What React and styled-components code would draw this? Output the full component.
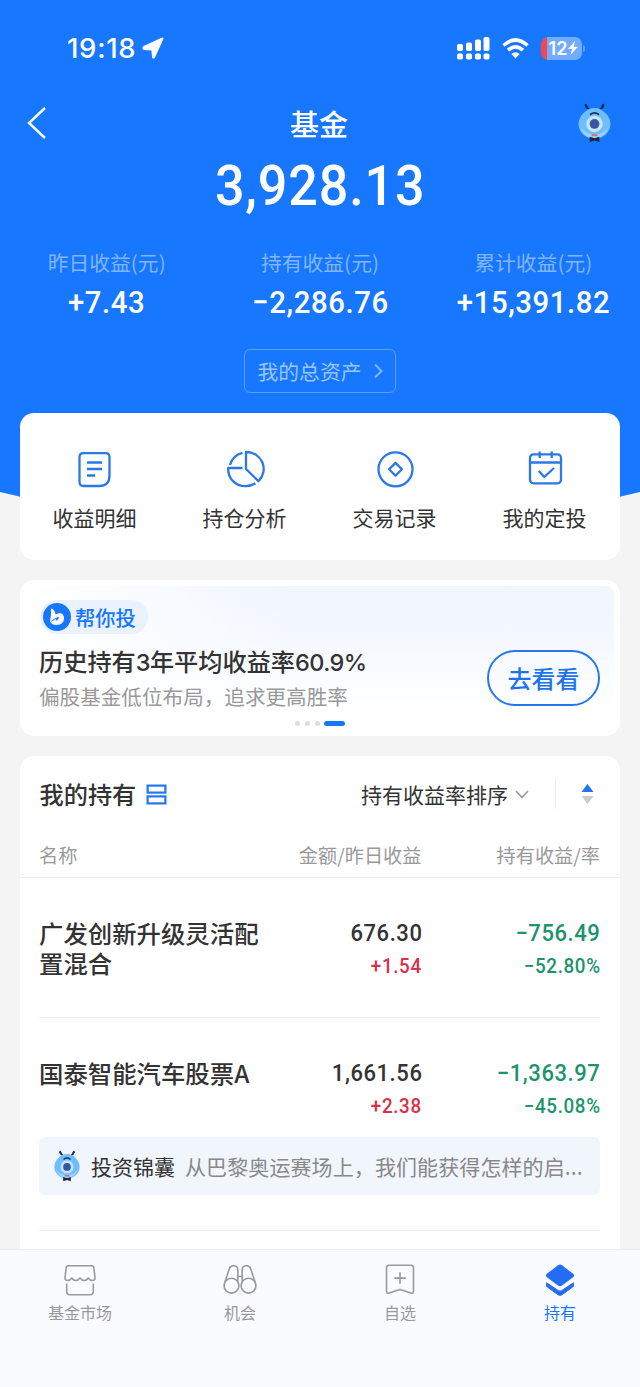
import React from "react";
import styled, { createGlobalStyle, css } from "styled-components";

const cjk = `"Noto Sans CJK SC", sans-serif`;
const blue = "#1777ff";

const GlobalStyle = createGlobalStyle`
  * { box-sizing: border-box; }
  body { margin: 0; background: #f4f4f4; font-family: ${cjk}; color: #333; }
  svg { display: block; flex: none; overflow: visible; }
`;

const Screen = styled.div`
  width: 640px;
  height: 1387px;
  overflow: hidden;
  display: flex;
  flex-direction: column;
  background: #f4f4f4;
`;

const Scroll = styled.main`
  height: 1249px;
  flex: none;
  overflow: hidden;
`;

const Hero = styled.header`
  height: 540px;
  background: ${blue};
  color: #fff;
  clip-path: path("M0 0H640V492Q320 572 0 492Z");
`;

const StatusBar = styled.div`
  height: 96px;
  padding: 0 55px 0 67px;
  display: flex;
  align-items: center;
  justify-content: space-between;
`;

const Clock = styled.div`
  display: flex;
  align-items: center;
  gap: 6px;
  font: 500 27.5px/32px Inter, sans-serif;
  letter-spacing: 0.7px;
`;

const StatusIcons = styled.div`
  display: flex;
  align-items: center;
  gap: 12px;
`;

const Battery = styled.div`
  width: 41px;
  height: 23px;
  border-radius: 7px;
  display: flex;
  align-items: center;
  justify-content: center;
  gap: 1px;
  padding-left: 4px;
  background: linear-gradient(90deg, #f0484d 0 6px, #72abff 6px);
  font: 600 18px/23px Inter, sans-serif;
`;

const BatteryWrap = styled.div`
  display: flex;
  align-items: center;
  gap: 1px;
`;

const BatteryTip = styled.div`
  width: 2px;
  height: 7px;
  border-radius: 0 2px 2px 0;
  background: #5c9dff;
`;

const NavBar = styled.div`
  height: 54px;
  padding: 0 29px 0 27px;
  display: grid;
  grid-template-columns: 60px 1fr 60px;
  align-items: center;
  justify-items: start;
  & > svg:last-child { justify-self: end; }
`;

const NavTitle = styled.h1`
  margin: 0;
  justify-self: center;
  font-size: 29px;
  line-height: 40px;
  font-weight: 500;
`;

const Num = styled.span`
  display: inline-block;
  font-family: Roboto, sans-serif;
  font-weight: 500;
  font-size: ${(p) => p.$size}px;
  line-height: ${(p) => p.$line}px;
  letter-spacing: ${(p) => p.$spacing || 0}px;
  margin-right: -${(p) => p.$spacing || 0}px;
  color: ${(p) => p.$color || "inherit"};
  white-space: nowrap;
  transform: scaleX(0.93);
  transform-origin: ${(p) => (p.$end ? "right" : "center")};
`;

const Total = styled.div`
  height: 76px;
  padding-bottom: 5px;
  display: flex;
  justify-content: center;
  align-items: center;
`;

const Stats = styled.div`
  display: grid;
  grid-template-columns: repeat(3, 213.3px);
  padding-top: 21px;
`;

const Stat = styled.div`
  display: flex;
  flex-direction: column;
  align-items: center;
  gap: 6px;
`;

const StatLabel = styled.span`
  font-size: 20.8px;
  line-height: 30px;
  color: #80b5ff;
`;

const AssetsButton = styled.button`
  width: 152px;
  height: 44px;
  margin: 26px auto 0;
  padding: 0 12px 0 12.5px;
  display: flex;
  align-items: center;
  justify-content: space-between;
  border: 1px solid #5c9fff;
  border-radius: 6px;
  background: none;
  color: #9bc5ff;
  font: 20.8px/30px ${cjk};
`;

const Card = styled.section`
  width: 600px;
  margin: 0 auto 20px;
  border-radius: 14px;
  background: #fff;
`;

const QuickCard = styled(Card)`
  position: relative;
  height: 147px;
  margin-top: -127px;
  display: grid;
  grid-template-columns: repeat(4, 150px);
`;

const Quick = styled.div`
  display: flex;
  flex-direction: column;
  align-items: center;
  padding: 36px 1px 0 0;
  gap: 13px;
  font-size: 21px;
  line-height: 30px;
`;

const Promo = styled(Card)`
  height: 156px;
  padding: 6px;
`;

const PromoBody = styled.div`
  height: 144px;
  border-radius: 8px;
  padding: 14px 14px 0 14px;
  display: flex;
  justify-content: space-between;
  background:
    linear-gradient(90deg, #fff 0%, rgba(255, 255, 255, 0) 45%),
    linear-gradient(180deg, #f0f6ff 0%, #f5f9ff 40%, #fff 85%);
`;

const PromoText = styled.div`
  width: 340px;
`;

const Badge = styled.div`
  display: flex;
  align-items: center;
  gap: 4px;
  width: 108px;
  height: 34px;
  padding-left: 3px;
  border-radius: 17px;
  background: #e9f2fe;
  color: ${blue};
  font-size: 20.3px;
  line-height: 34px;
  font-weight: 500;
`;

const PromoTitle = styled.h2`
  margin: 9px 0 0 -1px;
  font: 500 24.2px/36px ${cjk};
  white-space: nowrap;
`;

const Latin = styled.span`
  font-family: Inter, sans-serif;
  font-size: 23.5px;
  letter-spacing: -0.6px;
`;

const PromoSub = styled.p`
  margin: 0 0 0 -1px;
  font-size: 20.6px;
  line-height: 30px;
  color: #999;
  white-space: nowrap;
`;

const Dots = styled.div`
  display: flex;
  align-items: center;
  gap: 5px;
  margin: 10px 0 0 255px;
`;

const Dot = styled.i`
  width: ${(p) => (p.$active ? 21 : 5)}px;
  height: 5px;
  border-radius: 2.5px;
  background: ${(p) => (p.$active ? blue : "#dcdee1")};
  margin-left: ${(p) => (p.$active ? -1 : 0)}px;
`;

const PromoButton = styled.button`
  width: 113px;
  height: 56px;
  margin-top: 50px;
  padding: 0;
  border: 2px solid #2777e6;
  border-radius: 28px;
  background: transparent;
  color: #1b73ef;
  font: 500 24px/36px ${cjk};
`;

const Holdings = styled(Card)`
  height: 520px;
`;

const HoldingsHead = styled.div`
  height: 78px;
  padding: 0 26px 2px 19.5px;
  display: flex;
  align-items: center;
`;

const HoldingsTitle = styled.h2`
  margin: 0 9.5px 0 0;
  font-size: 24.2px;
  line-height: 36px;
  font-weight: 500;
`;

const SortBy = styled.div`
  margin-left: auto;
  display: flex;
  align-items: center;
  gap: 7px;
  font-size: 21px;
  line-height: 30px;
`;

const Rule = styled.span`
  width: 1px;
  height: 30px;
  margin: 0 25px 0 26px;
  background: #eee;
`;

const columns = css`
  display: grid;
  grid-template-columns: 240px 142.5px 178.5px;
`;

const ColumnHead = styled.div`
  ${columns}
  height: 44px;
  padding: 6px 20px 0 19px;
  border-bottom: 1px solid #eee;
  font-size: 19.2px;
  line-height: 30px;
  color: #999;
  & > span + span { text-align: right; }
`;

const Fund = styled.article`
  ${columns}
  height: ${(p) => p.$height}px;
  margin: 0 20px 0 19px;
  padding-top: 40px;
  border-bottom: 1px solid #f0f0f0;
  align-content: start;
`;

const FundName = styled.h3`
  margin: 0;
  font-size: 24.4px;
  line-height: 29.5px;
  font-weight: 500;
`;

const Figures = styled.div`
  display: flex;
  flex-direction: column;
  align-items: flex-end;
  gap: 3px;
`;

const Tip = styled.div`
  grid-column: 1 / -1;
  height: 58px;
  margin-top: 16px;
  padding: 0 14px 0 15px;
  display: flex;
  align-items: center;
  border-radius: 6px;
  background: #f1f6fd;
  font-size: 21px;
  line-height: 30px;
  white-space: nowrap;
`;

const TipTitle = styled.span`
  margin: 0 10px 0 11px;
`;

const TipText = styled.span`
  color: #888;
  letter-spacing: 0.1px;
`;

const TabBar = styled.nav`
  height: 138px;
  display: grid;
  grid-template-columns: repeat(4, 160px);
  border-top: 1px solid #ececf0;
  background: #f9fbff;
`;

const Tab = styled.div`
  display: flex;
  flex-direction: column;
  align-items: center;
  gap: 3px;
  padding-top: 13px;
  font-size: 16px;
  line-height: 24px;
  color: ${(p) => (p.$active ? blue : "#999")};
`;

const Mascot = ({ width, height }) => (
  <svg width={width} height={height} viewBox="0 0 34 40" preserveAspectRatio="none">
    <path d="M12 6.500L7.800 2M22 6.500L26.200 2" stroke="#16305c" strokeWidth="2" strokeLinecap="round" />
    <path d="M8 1l1.500 3M26 1l-1.500 3" stroke="#16305c" strokeWidth="2.400" strokeLinecap="round" />
    <path d="M17 4C25 4 33.500 12 33.500 20.500S26 35.500 17 35.500.5 29 .5 20.500 9 4 17 4Z" fill="#70bdfb" />
    <path d="M3 24C5 32 12 35.500 17 35.500s12-3.500 14-11.500c-4 5-8 7-14 7S7 29 3 24Z" fill="#9ad5ff" />
    <circle cx="17" cy="20.500" r="8.500" fill="#c5e5ff" />
    <path d="M13 10.500q4-3 8 0" fill="none" stroke="#15315c" strokeWidth="1.800" strokeLinecap="round" />
    <circle cx="17" cy="20.500" r="5" fill="#34579d" />
    <path d="M14 32h6" stroke="#e16a70" strokeWidth="2" />
    <path d="M12 33.500l5 1.500 5-1.500v5.500l-5-1.500-5 1.500Z" fill="#1b2640" />
  </svg>
);

const iconLine = { fill: "none", stroke: "#2b78e8", strokeWidth: 2.3, strokeLinejoin: "round" };

const DetailIcon = () => (
  <svg width="40" height="40" viewBox="0 0 40 40" {...iconLine}>
    <path d="M8.500 4.200H30.500Q34.500 4.200 34.500 8.200V26.500Q34.500 37 24 37H8.500Q4.500 37 4.500 33V8.200Q4.500 4.200 8.500 4.200Z" />
    <path d="M12 13.500H27M12 20H27M12 26.500H20" />
  </svg>
);

const AnalysisIcon = () => (
  <svg width="40" height="40" viewBox="0 0 40 40" {...iconLine}>
    <path d="M21 3A17 17 0 0 1 33.500 32.200L21 20Z" />
    <path d="M17.500 3.800A17.200 17.200 0 0 0 5 16M17.500 19H3.200C2.800 29 10 37.200 20.500 37.200Q26 37.200 30.500 34.200" />
  </svg>
);

const RecordIcon = () => (
  <svg width="40" height="40" viewBox="0 0 40 40" {...iconLine}>
    <circle cx="20.500" cy="20.300" r="17" />
    <path d="M20.500 13.900L26.900 20.300 20.500 26.700 14.100 20.300Z" />
  </svg>
);

const PlanIcon = () => (
  <svg width="40" height="40" viewBox="0 0 40 40" {...iconLine}>
    <rect x="5" y="5.300" width="31" height="29" rx="3.500" />
    <path d="M5 13.500H36M14.700 2.500V9M26.700 2.500V9M13.800 22L19.300 28 29 19" />
  </svg>
);

const MarketIcon = () => (
  <svg width="32" height="34" viewBox="0 0 32 34" fill="none" stroke="#999" strokeWidth="1.600" strokeLinejoin="round">
    <path d="M4 2.800H28Q29.500 2.800 29.800 4.500L31 14.500Q31 17.500 28.500 17.500Q26 17.500 24.200 15Q22.500 17.500 20.200 17.500Q18 17.500 16 15Q14 17.500 11.800 17.500Q9.500 17.500 7.800 15Q6 17.500 3.500 17.500Q1 17.500 1 14.500L2.200 4.500Q2.500 2.800 4 2.800Z" />
    <path d="M2.700 20.500V28.500Q2.700 31.800 6 31.800H26Q29.300 31.800 29.300 28.500V20.500" />
  </svg>
);

const ChanceIcon = () => (
  <svg width="34" height="34" viewBox="0 0 34 34" fill="none" stroke="#999" strokeWidth="1.600">
    <circle cx="8.500" cy="22.700" r="7.400" />
    <circle cx="25.500" cy="22.700" r="7.400" />
    <path d="M1.800 19.500L6.200 6Q7.200 2.800 10.500 2.800Q14.800 2.800 14.800 7V19M32.200 19.500L27.800 6Q26.800 2.800 23.500 2.800Q19.200 2.800 19.200 7V19M14.800 13.500H19.200" />
  </svg>
);

const WatchIcon = () => (
  <svg width="32" height="34" viewBox="0 0 32 34" fill="none" stroke="#999" strokeWidth="1.600" strokeLinejoin="round">
    <path d="M5 2.300H27Q29.500 2.300 29.500 4.800V28.300Q29.500 30.800 27 30.100L16 26.600 5 30.100Q2.500 30.800 2.500 28.300V4.800Q2.500 2.300 5 2.300ZM16 9.300V20.800M10.200 15.100H21.800" />
  </svg>
);

const HoldIcon = () => (
  <svg width="32" height="34" viewBox="0 0 32 34" fill="#246bf5">
    <path d="M14 2.200Q16 1 18 2.200L28.800 10.600Q31.200 12.500 28.800 14.400L18 22.500Q16 23.800 14 22.500L3.200 14.400Q.8 12.500 3.200 10.600Z" />
    <path d="M2.500 19.800V22.500Q2.500 23.500 3.300 24L14 31.700Q16 33 18 31.700L28.700 24Q29.500 23.500 29.500 22.500V19.800L17.500 27.700Q16 28.600 14.500 27.700Z" stroke="#246bf5" strokeLinejoin="round" />
  </svg>
);

const green = "#1b946d";
const red = "#d9304a";

const stats = [
  ["昨日收益(元)", "+7.43"],
  ["持有收益(元)", "−2,286.76"],
  ["累计收益(元)", "+15,391.82"],
];

const quickLinks = [
  ["收益明细", DetailIcon],
  ["持仓分析", AnalysisIcon],
  ["交易记录", RecordIcon],
  ["我的定投", PlanIcon],
];

const tabs = [
  ["基金市场", MarketIcon],
  ["机会", ChanceIcon],
  ["自选", WatchIcon],
  ["持有", HoldIcon],
];

const FundFigures = ({ main, sub, color, subColor }) => (
  <Figures>
    <Num $end $size={23.7} $line={30} $spacing={0.6} $color={color}>{main}</Num>
    <Num $end $size={20.2} $line={30} $spacing={0.7} $color={subColor}>{sub}</Num>
  </Figures>
);

export default function App() {
  return (
    <Screen>
      <GlobalStyle />
      <Scroll>
        <Hero>
          <StatusBar>
            <Clock>
              19:18
              <svg width="22" height="22" viewBox="0 0 22 22" fill="#fff" stroke="#fff" strokeWidth="2" strokeLinejoin="round">
                <path d="M20.500 1.500L12 20.300Q11.200 21 11 20L10.300 12.500 2 12Q.8 11 2 10Z" />
              </svg>
            </Clock>
            <StatusIcons>
              <svg width="33" height="24" viewBox="0 0 33 24" fill="#fff">
                <rect x="0" y="8" width="6" height="7" rx="1.800" />
                <rect x="9" y="6.500" width="6" height="8.500" rx="1.800" />
                <rect x="18" y="3.500" width="6" height="11.500" rx="1.800" />
                <rect x="26.500" y="1" width="6" height="14" rx="1.800" />
                <rect x="0" y="17.500" width="6" height="6" rx="1.800" />
                <rect x="9" y="17.500" width="6" height="6" rx="1.800" />
                <rect x="18" y="17.500" width="6" height="6" rx="1.800" />
                <rect x="26.500" y="17.500" width="6" height="6" rx="1.800" />
              </svg>
              <svg width="27" height="21" viewBox="0 0 27 21" fill="none" stroke="#fff" strokeWidth="3.600">
                <path d="M1.500 7.500Q13.500-3.500 25.500 7.500M6 12.200Q13.500 5.500 21 12.200" />
                <path d="M13.500 20.500L9.300 16Q13.500 12.500 17.700 16Z" fill="#fff" stroke="none" />
              </svg>
              <BatteryWrap>
                <Battery>
                  12
                  <svg width="10" height="14" viewBox="0 0 10 14" fill="#fff">
                    <path d="M7 0L0 8H4L2.500 14 10 5.700H5.800Z" />
                  </svg>
                </Battery>
                <BatteryTip />
              </BatteryWrap>
            </StatusIcons>
          </StatusBar>
          <NavBar>
            <svg width="20" height="32" viewBox="0 0 20 32" fill="none" stroke="#fff" strokeWidth="2.400">
              <path d="M18 1L2 16 18 31" />
            </svg>
            <NavTitle>基金</NavTitle>
            <Mascot width={33} height={39} />
          </NavBar>
          <Total>
            <Num $size={56} $line={64} $spacing={0.9}>3,928.13</Num>
          </Total>
          <Stats>
            {stats.map(([label, value]) => (
              <Stat key={label}>
                <StatLabel>{label}</StatLabel>
                <Num $size={31.5} $line={40} $spacing={0.65}>{value}</Num>
              </Stat>
            ))}
          </Stats>
          <AssetsButton>
            我的总资产
            <svg width="9" height="16" viewBox="0 0 9 16" fill="none" stroke="#80b5ff" strokeWidth="2">
              <path d="M1 1.500L7.500 8 1 14.500" />
            </svg>
          </AssetsButton>
        </Hero>

        <QuickCard>
          {quickLinks.map(([label, Icon]) => (
            <Quick key={label}>
              <Icon />
              {label}
            </Quick>
          ))}
        </QuickCard>

        <Promo>
          <PromoBody>
            <PromoText>
              <Badge>
                <svg width="28" height="28" viewBox="0 0 28 28">
                  <circle cx="14" cy="14" r="14" fill={blue} />
                  <path d="M8 5.500Q12 6.500 12.500 11.500Q20.500 8 21 15Q21 22 13.500 22Q9 22 7 18.500Q8.500 12 8 5.500Z" fill="#fff" />
                  <path d="M7.500 19.500Q10.500 14.500 16.500 14Q15 17.500 12 18.500Q10 19 7.500 19.500Z" fill={blue} />
                  <path d="M8.500 19.500Q11.500 18.500 13 16.500" fill="none" stroke="#fff" strokeWidth="1.800" />
                </svg>
                帮你投
              </Badge>
              <PromoTitle>
                历史持有<Latin>3</Latin>年平均收益率<Latin>60.9%</Latin>
              </PromoTitle>
              <PromoSub>偏股基金低位布局，追求更高胜率</PromoSub>
              <Dots>
                <Dot />
                <Dot />
                <Dot />
                <Dot $active />
              </Dots>
            </PromoText>
            <PromoButton>去看看</PromoButton>
          </PromoBody>
        </Promo>

        <Holdings>
          <HoldingsHead>
            <HoldingsTitle>我的持有</HoldingsTitle>
            <svg width="21" height="21" viewBox="0 0 21 21" fill="none" stroke="#2276f5" strokeWidth="2.200">
              <rect x="1.600" y="1.600" width="17.800" height="7" />
              <rect x="1.600" y="12.400" width="17.800" height="7" />
            </svg>
            <SortBy>
              持有收益率排序
              <svg width="14" height="9" viewBox="0 0 14 9" fill="none" stroke="#999" strokeWidth="1.700">
                <path d="M1 1L7 7.500 13 1" />
              </svg>
            </SortBy>
            <Rule />
            <svg width="13" height="20" viewBox="0 0 13 20">
              <path d="M6.500 0L12.500 8H.5Z" fill="#2276f5" />
              <path d="M6.500 20L12.500 12H.5Z" fill="#ccc" />
            </svg>
          </HoldingsHead>
          <ColumnHead>
            <span>名称</span>
            <span>金额/昨日收益</span>
            <span>持有收益/率</span>
          </ColumnHead>
          <Fund $height={140}>
            <FundName>广发创新升级灵活配置混合</FundName>
            <FundFigures main="676.30" sub="+1.54" subColor={red} />
            <FundFigures main="−756.49" sub="−52.80%" color={green} subColor={green} />
          </Fund>
          <Fund $height={213}>
            <FundName>国泰智能汽车股票A</FundName>
            <FundFigures main="1,661.56" sub="+2.38" subColor={red} />
            <FundFigures main="−1,363.97" sub="−45.08%" color={green} subColor={green} />
            <Tip>
              <Mascot width={26} height={31} />
              <TipTitle>投资锦囊</TipTitle>
              <TipText>从巴黎奥运赛场上，我们能获得怎样的启...</TipText>
            </Tip>
          </Fund>
        </Holdings>
      </Scroll>

      <TabBar>
        {tabs.map(([label, Icon], i) => (
          <Tab key={label} $active={i === 3}>
            <Icon />
            {label}
          </Tab>
        ))}
      </TabBar>
    </Screen>
  );
}
